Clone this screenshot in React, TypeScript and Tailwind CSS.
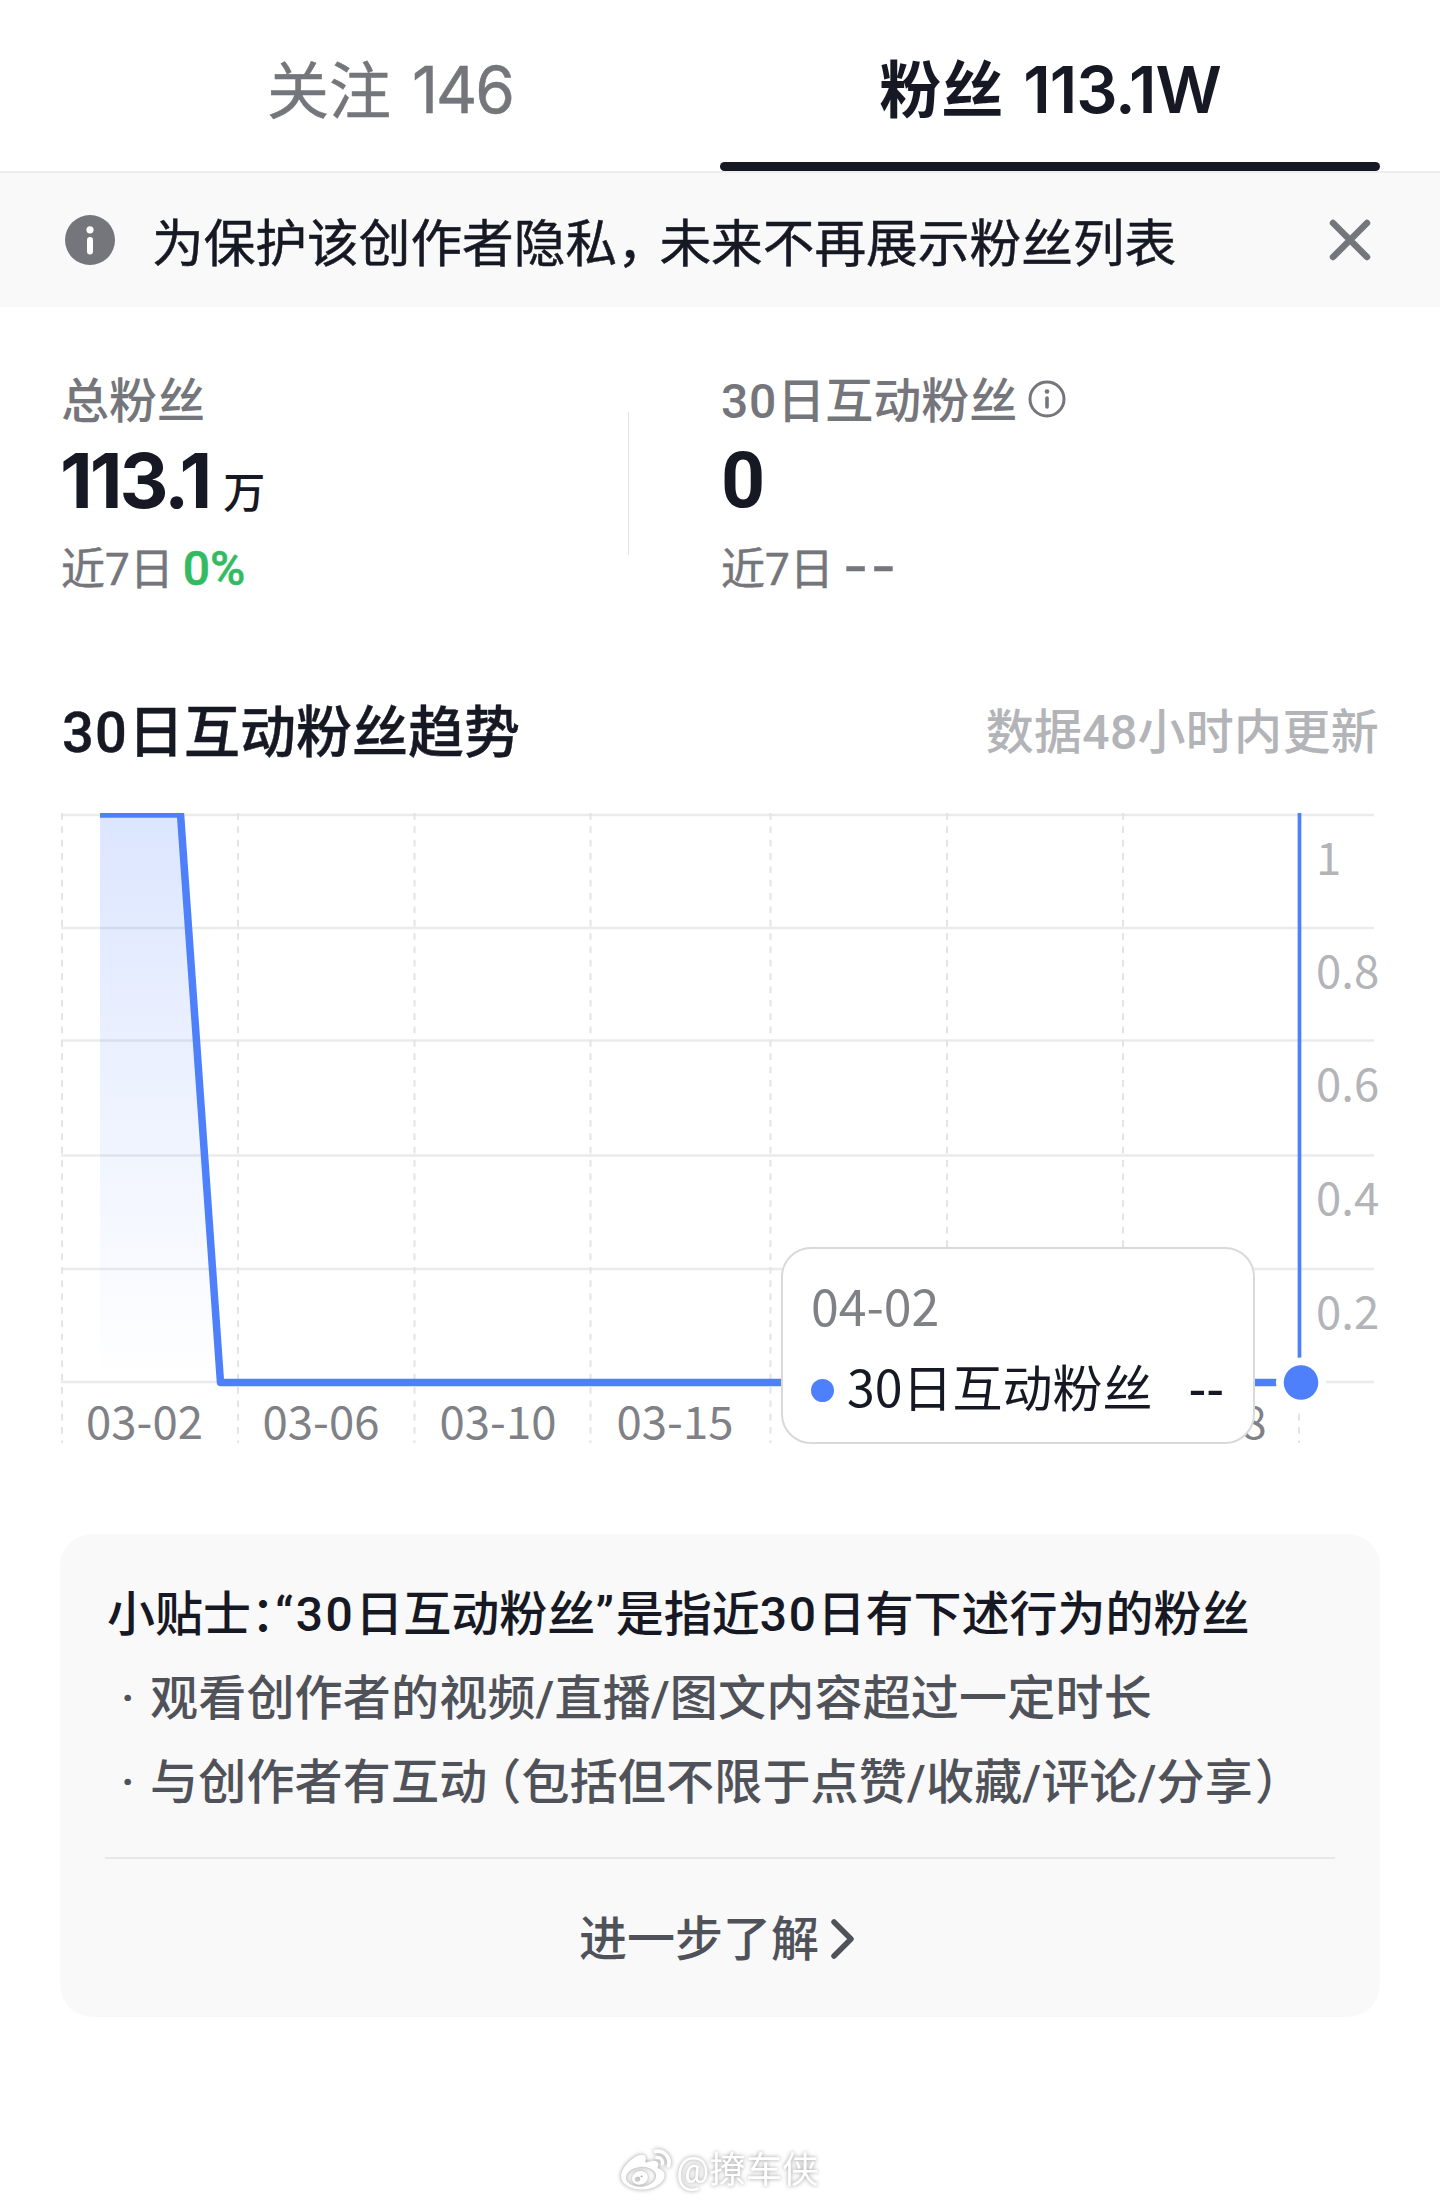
import { FaWeibo } from "react-icons/fa";

const BLUE = "#4f80fb";

// Chart geometry, in chart pixels (the svg is 1440 x 670).
const GRID_Y = [15, 128, 240.5, 355.5, 469, 582];
const GRID_X = [62, 238, 414.5, 590.5, 770.5, 947, 1123, 1299];

const Y_LABELS = [
    { text: "1", y: 75 },
    { text: "0.8", y: 188 },
    { text: "0.6", y: 301 },
    { text: "0.4", y: 414.5 },
    { text: "0.2", y: 528.5 },
];

const X_LABELS = [
    { text: "03-02", x: 144.5 },
    { text: "03-06", x: 321 },
    { text: "03-10", x: 498 },
    { text: "03-15", x: 675 },
    { text: "03-28", x: 1208 },
];

function Tabs() {
    return (
        <div className="flex h-[173px] border-b-2 border-[#ededee] px-[60px] font-['Inter','Noto_Sans_CJK_SC',sans-serif]">
            <div className="flex w-[660px] items-center justify-center pt-[9px] text-[62px] leading-none text-[#75767b]">
                <span className="pt-[3px] [-webkit-text-stroke:0.5px]">关注</span>
                <span className="ml-[21px] text-[64px] tracking-[-2px] [-webkit-text-stroke:0.5px]">146</span>
            </div>
            <div className="flex w-[660px] flex-col">
                <div className="flex h-[162px] items-center justify-center pt-[16px] text-[62px] leading-none font-semibold text-[#161823]">
                    <span className="pt-[4px]">粉丝</span>
                    <span className="ml-[20px] text-[65px] tracking-[-1px]">113.1W</span>
                </div>
                <div className="h-[9px] shrink-0 rounded-full bg-[#161823]" />
            </div>
        </div>
    );
}

function Notice() {
    return (
        <div className="flex h-[134px] items-center bg-[#f9f9f9] pr-[69px] pl-[65px]">
            <svg width="50" height="50" viewBox="0 0 50 50" className="shrink-0">
                <circle cx="25" cy="25" r="25" fill="#75767b" />
                <circle cx="25" cy="14.8" r="3.6" fill="#fff" />
                <path d="M25 25v11.5" stroke="#fff" strokeWidth="6" strokeLinecap="round" />
            </svg>
            <p className="ml-[37px] pt-[9px] text-[51.7px] leading-none text-[#161823] [-webkit-text-stroke:0.5px]">
                为保护该创作者隐私<span className="tracking-[-9.5px]">，</span>未来不再展示粉丝列表
            </p>
            <svg width="42" height="42" viewBox="0 0 42 42" className="ml-auto shrink-0">
                <path d="M4 4l34 34M38 4L4 38" stroke="#75767b" strokeWidth="6.5" strokeLinecap="round" />
            </svg>
        </div>
    );
}

function Stats() {
    return (
        <div className="flex pt-[65px] pl-[61px]">
            <div className="flex w-[567px] flex-col">
                <div className="text-[48px] leading-[60px] font-medium text-[#75767b]">总粉丝</div>
                <div className="mt-[8px] flex h-[80px] items-baseline font-['Inter','Noto_Sans_CJK_SC',sans-serif] leading-[80px] text-[#161823]">
                    <span className="-ml-px text-[76px] font-bold tracking-[-3px]">113.1</span>
                    <span className="ml-[14px] text-[42px] font-medium">万</span>
                </div>
                <div className="mt-[20px] flex text-[44px] leading-[60px] text-[#75767b] [-webkit-text-stroke:0.5px]">
                    <span>近7日</span>
                    <span className="ml-[9px] text-[48px] leading-[58px] font-medium text-[#33bb61]">0%</span>
                </div>
            </div>
            <div className="mt-[40px] h-[143px] w-px bg-[#e3e3e4]" />
            <div className="ml-[92px] flex flex-col">
                <div className="flex items-center text-[48px] leading-[60px] font-medium text-[#75767b]">
                    <span>
                        <span className="tracking-[0.8px]">30</span>日互动粉丝
                    </span>
                    <svg width="38" height="38" viewBox="0 0 38 38" className="mb-[6px] ml-[11px]">
                        <circle cx="19" cy="19" r="17" fill="none" stroke="#75767b" strokeWidth="3" />
                        <circle cx="19" cy="11.5" r="2.3" fill="#75767b" />
                        <path d="M19 18v9" stroke="#75767b" strokeWidth="3.6" strokeLinecap="round" />
                    </svg>
                </div>
                <div className="mt-[9px] text-[77px] leading-[80px] font-bold text-[#161823]">0</div>
                <div className="mt-[19px] flex text-[44px] leading-[60px] text-[#75767b] [-webkit-text-stroke:0.5px]">
                    <span>近7日</span>
                    <span className="ml-[9px] font-['Inter'] text-[56px] leading-[53px] tracking-[2px]">--</span>
                </div>
            </div>
        </div>
    );
}

function TrendChart() {
    return (
        <div className="relative mt-[27px] h-[670px] font-['Noto_Sans_CJK_SC',sans-serif]">
            <svg width="1440" height="670" viewBox="0 0 1440 670">
                <defs>
                    <linearGradient id="area" x1="0" y1="0" x2="0" y2="1">
                        <stop offset="0" stopColor={BLUE} stopOpacity="0.2" />
                        <stop offset="1" stopColor={BLUE} stopOpacity="0" />
                    </linearGradient>
                    <clipPath id="plot">
                        <rect x="100" y="13" width="1300" height="600" />
                    </clipPath>
                </defs>
                {GRID_Y.map((y) => (
                    <path key={y} d={`M61 ${y}H1374`} stroke="#ebebeb" strokeWidth="2.4" />
                ))}
                {GRID_X.map((x) => (
                    <path key={x} d={`M${x} 13V643`} stroke="#e4e4e5" strokeWidth="2" strokeDasharray="6.7 6.65" />
                ))}
                <path d="M100 15H180L220 582H100Z" fill="url(#area)" />
                <path
                    d="M100 14H180.5L220.5 582.5H1300"
                    fill="none"
                    stroke={BLUE}
                    strokeWidth="7.5"
                    strokeLinejoin="round"
                    clipPath="url(#plot)"
                />
                <path d="M1299.5 13V558" stroke={BLUE} strokeWidth="3.7" />
                <circle cx="1301" cy="582.5" r="25" fill="#fff" />
                <circle cx="1301" cy="582.5" r="17.3" fill={BLUE} />
                <g fontSize="45.5" fill="#b3b4b8">
                    {Y_LABELS.map((l) => (
                        <text key={l.text} x="1316" y={l.y}>
                            {l.text}
                        </text>
                    ))}
                </g>
                <g fontSize="45.5" fill="#808186" textAnchor="middle">
                    {X_LABELS.map((l) => (
                        <text key={l.text} x={l.x} y="639">
                            {l.text}
                        </text>
                    ))}
                </g>
            </svg>
            <div className="absolute top-[447px] left-[781px] h-[197px] w-[474px] rounded-[30px] border-2 border-[#d9d9da] bg-white pt-[17px] pl-[28px]">
                <div className="text-[50px] leading-[76px] text-[#808186]">04-02</div>
                <div className="mt-[5px] flex items-center text-[50px] leading-[76px] text-[#161823]">
                    <span className="mt-[10px] h-[23px] w-[23px] rounded-full bg-[#4f80fb]" />
                    <span className="ml-[13px]">30日互动粉丝</span>
                    <span className="ml-[36px] font-medium">--</span>
                </div>
            </div>
        </div>
    );
}

function Tips() {
    return (
        <div className="mx-[60px] mt-[64px] flex h-[483px] flex-col rounded-[32px] bg-[#f9f9f9] px-[45px] pt-[39px] text-[48px] leading-[84px] font-medium text-[#50525a]">
            <div className="pl-[2px] text-[#161823]">
                小贴士<span className="tracking-[-24px]">：</span>
                <span className="tracking-[2.5px]">“30</span>日互动粉丝<span className="tracking-[2px]">”</span>是指近
                <span className="tracking-[1.5px]">30</span>日有下述行为的粉丝
            </div>
            <div className="flex tracking-[0.2px]">
                <span className="w-[45px] pl-[16px]">·</span>
                <span>观看创作者的视频/直播/图文内容超过一定时长</span>
            </div>
            <div className="flex tracking-[0.2px]">
                <span className="w-[45px] pl-[16px]">·</span>
                <span>
                    与创作者有互<span className="tracking-[-14px]">动</span>（包括但不限于点赞/收藏/评论/分享<span className="ml-[2px]">）</span>
                </span>
            </div>
            <div className="mt-[32px] h-[2px] shrink-0 bg-[#e8e8e9]" />
            <div className="mt-[51px] flex items-center justify-center leading-[60px]">
                <span>进一步了解</span>
                <svg width="26" height="42" viewBox="0 0 26 42" className="mr-[5px] mb-[2px] ml-[11px]">
                    <path d="M4 4l17 17L4 38" fill="none" stroke="#50525a" strokeWidth="5.5" strokeLinecap="round" strokeLinejoin="round" />
                </svg>
            </div>
        </div>
    );
}

export default function App() {
    return (
        <div className="h-[2203px] w-[1440px] overflow-hidden bg-white font-['Roboto','Noto_Sans_CJK_SC',sans-serif] whitespace-nowrap">
            <Tabs />
            <Notice />
            <Stats />
            <div className="mt-[93px] flex items-center justify-between pr-[61px] pl-[62px] leading-[80px]">
                <h2 className="text-[56px] font-medium text-[#161823] [-webkit-text-stroke:0.4px]">
                    <span className="tracking-[1.2px]">30</span>日互动粉丝趋势
                </h2>
                <span className="text-[48px] font-medium tracking-[0.3px] text-[#b3b4b8]">数据48小时内更新</span>
            </div>
            <TrendChart />
            <Tips />
            <div className="mt-[129px] flex items-center justify-center text-[36.5px] leading-[50px] text-white drop-shadow-[0_0_2px_#999999]">
                <FaWeibo className="h-[50px] w-[50px]" />
                <span className="ml-[5px]">@撩车侠</span>
            </div>
        </div>
    );
}
